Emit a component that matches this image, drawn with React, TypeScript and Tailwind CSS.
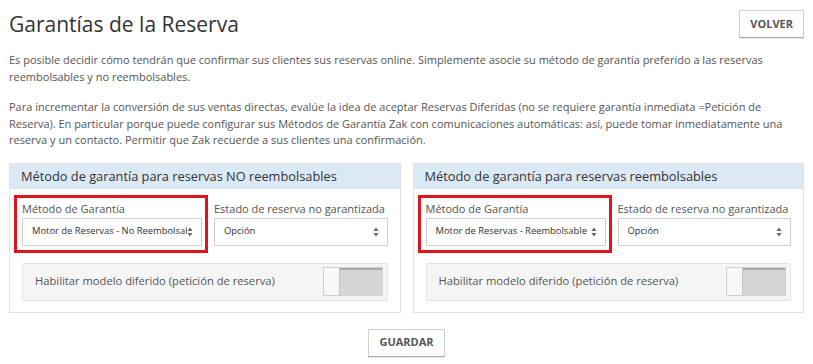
import React from 'react';

const font = { fontFamily: '"Open Sans", "Liberation Sans", sans-serif' };

function SelectArrows() {
  return (
    <svg width="6" height="10" viewBox="0 0 6 10" className="shrink-0">
      <path d="M3 0.5 L5.5 4 L0.5 4 Z" fill="#666" />
      <path d="M3 9.5 L5.5 6 L0.5 6 Z" fill="#666" />
    </svg>
  );
}

function FakeSelect({ value }: { value: string }) {
  return (
    <div className="flex h-[28px] items-center justify-between border border-[#cfcfcf] bg-white pl-[9px] pr-[8px]">
      <span className="min-w-0 overflow-hidden whitespace-nowrap text-[9.4px] text-[#333]">{value}</span>
      <SelectArrows />
    </div>
  );
}

function Toggle() {
  return (
    <div className="flex h-[29px] w-[60px] overflow-hidden border border-[#d0d0d0]">
      <div className="w-[16px] border-r border-[#c4c4c4] bg-[#f7f7f7]" />
      <div className="flex-1 border-t-2 border-[#a9a9a9] bg-[#d6d6d6]" />
    </div>
  );
}

function Panel({ title, method }: { title: string; method: string }) {
  return (
    <div className="min-w-0 flex-1 border border-[#dfe3e8] bg-white">
      <div className="h-[25px] bg-[#dbe9f5] pl-[11px] text-[12.8px] leading-[25px] text-[#333]">{title}</div>
      <div className="px-[12px] pb-[11px] pt-[13px]">
        <div className="relative grid grid-cols-[180px_minmax(0,1fr)] gap-x-[12px]">
          <div className="pointer-events-none absolute left-[-8px] top-[-7px] h-[58px] w-[194px] border-[3px] border-[#e0141b]" />
          <div>
            <div className="mb-[2px] text-[11px] leading-[14px] text-[#555]">Método de Garantía</div>
            <FakeSelect value={method} />
          </div>
          <div>
            <div className="mb-[2px] whitespace-nowrap text-[11px] leading-[14px] text-[#555]">Estado de reserva no garantizada</div>
            <FakeSelect value="Opción" />
          </div>
        </div>
        <div className="mt-[17px] flex h-[38px] items-center justify-between rounded-[2px] border border-[#e3e3e3] bg-[#f5f5f5] pl-[12px] pr-[4px]">
          <span className="text-[11.2px] text-[#555]">Habilitar modelo diferido (petición de reserva)</span>
          <Toggle />
        </div>
      </div>
    </div>
  );
}

function Button({ children }: { children: React.ReactNode }) {
  return (
    <button className="h-[28px] border border-[#cfcfcf] border-b-[#a8a8a8] bg-white px-[10px] text-[11px] font-bold text-[#555] shadow-[0_1px_1px_rgba(0,0,0,0.08)]">
      {children}
    </button>
  );
}

export default function App() {
  return (
    <div className="h-[364px] w-[813px] bg-white px-[9px] pt-[10px]" style={font}>
      <div className="flex items-start justify-between">
        <h1 className="text-[21px] leading-[28px] text-[#333]">Garantías de la Reserva</h1>
        <Button>VOLVER</Button>
      </div>
      <div className="mt-[14px] text-[11px] leading-[16.5px] text-[#555]">
        <p>
          Es posible decidir cómo tendrán que confirmar sus clientes sus reservas online. Simplemente asocie su método de garantía preferido a las reservas reembolsables y no reembolsables.
        </p>
        <p className="mt-[14px]">
          Para incrementar la conversión de sus ventas directas, evalúe la idea de aceptar Reservas Diferidas (no se requiere garantía inmediata =Petición de Reserva). En particular porque puede configurar sus Métodos de Garantía Zak con comunicaciones automáticas: así, puede tomar inmediatamente una reserva y un contacto. Permitir que Zak recuerde a sus clientes una confirmación.
        </p>
      </div>
      <div className="mt-[14px] flex gap-[12px]">
        <Panel title="Método de garantía para reservas NO reembolsables" method="Motor de Reservas - No Reembolsable" />
        <Panel title="Método de garantía para reservas reembolsables" method="Motor de Reservas - Reembolsable" />
      </div>
      <div className="mt-[16px] flex justify-center">
        <Button>GUARDAR</Button>
      </div>
    </div>
  );
}
